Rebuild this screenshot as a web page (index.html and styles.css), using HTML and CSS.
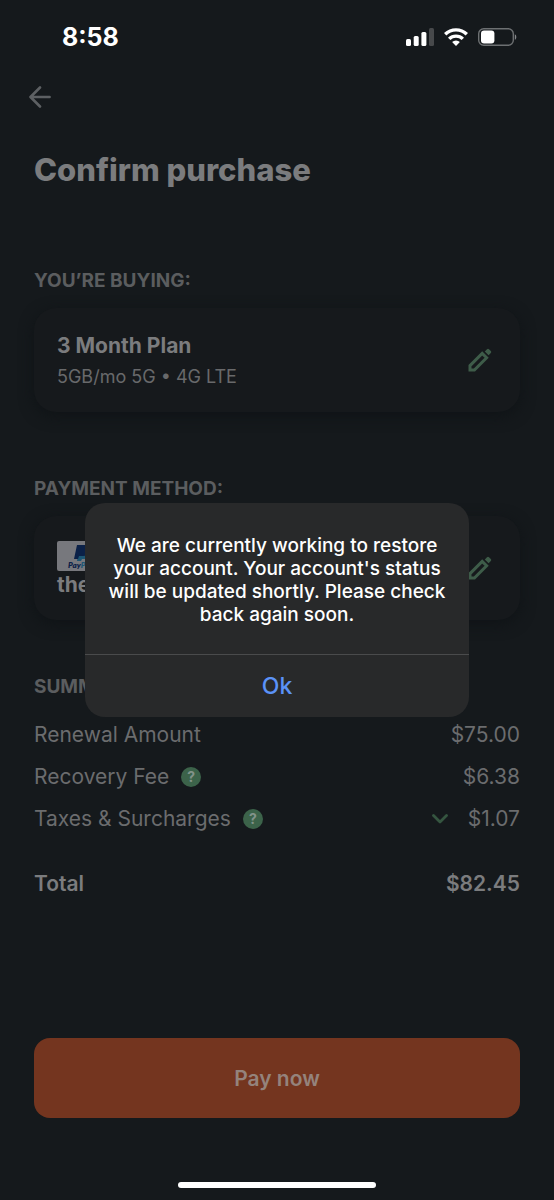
FILE: index.html
```html
<!DOCTYPE html>
<html lang="en">
<head>
<meta charset="utf-8">
<meta name="viewport" content="width=device-width, initial-scale=1">
<title>Confirm purchase</title>
<link rel="stylesheet" href="styles.css">
</head>
<body>
<div class="screen">
  <header class="status">
    <time class="clock">8:58</time>
    <div class="indicators">
      <svg width="28" height="18" viewBox="0 0 28 18" aria-hidden="true">
        <rect x="0" y="11" width="5" height="7" rx="1.5" fill="#fff"/>
        <rect x="7.7" y="8" width="5" height="10" rx="1.5" fill="#fff"/>
        <rect x="15.4" y="4" width="5" height="14" rx="1.5" fill="#fff"/>
        <rect x="23" y="0" width="5" height="18" rx="1.5" fill="#47494b"/>
      </svg>
      <svg width="24" height="18" viewBox="0 0 24 18" aria-hidden="true">
        <g fill="none" stroke="#fff" stroke-width="3.4">
          <path d="M1.200 6.300a15.400 15.400 0 0 1 21.600 0"/>
          <path d="M5.200 10.900a9.600 9.600 0 0 1 13.600 0"/>
        </g>
        <path d="M12 18l-3.900-4a5.600 5.600 0 0 1 7.800 0z" fill="#fff"/>
      </svg>
      <svg width="39" height="18" viewBox="0 0 39 18" aria-hidden="true">
        <rect x=".7" y=".7" width="34.6" height="16.6" rx="5" fill="none" stroke="#6d7072" stroke-width="1.4"/>
        <rect x="3" y="2.6" width="13.400" height="12.8" rx="3" fill="#fff"/>
        <path d="M36.800 6.200c2 .8 2 4.800 0 5.600z" fill="#85878a"/>
      </svg>
    </div>
  </header>

  <nav class="nav">
    <button class="icon-button" type="button" aria-label="Back">
      <svg width="22" height="22" viewBox="0 0 22 22" fill="none" stroke="#5d6063" stroke-width="2.600" stroke-linecap="round" stroke-linejoin="round"><path d="M20.600 11H1.600M11 1.500L1.500 11l9.500 9.500"/></svg>
    </button>
  </nav>

  <main class="content">
    <h1 class="title">Confirm purchase</h1>

    <section class="section">
      <h2 class="label">YOU’RE BUYING:</h2>
      <div class="card">
        <div class="card-text plan">
          <strong class="card-title">3 Month Plan</strong>
          <span class="card-detail">5GB/mo 5G • 4G LTE</span>
        </div>
        <button class="icon-button" type="button" aria-label="Edit plan">
          <svg width="24" height="24" viewBox="0 0 24 24"><path d="M2 17.600L14.200 5.400l4.400 4.400L6.400 22H2z" fill="none" stroke="#3e5c49" stroke-width="3"/><path d="M16.800 3.400L19 1.200q1-1 2 0l1.800 1.800q1 1 0 2l-2.200 2.200z" fill="#3e5c49"/></svg>
        </button>
      </div>
    </section>

    <section class="section">
      <h2 class="label">PAYMENT METHOD:</h2>
      <div class="card">
        <div class="card-text payment">
          <svg class="paypal" width="48" height="30" viewBox="0 0 48 30" role="img" aria-label="PayPal">
            <rect width="48" height="30" rx="2" fill="#77787d"/>
            <path d="M22 8h8q5 1 4 6-1 4-6 4h-3l-1 2h-4z" fill="#1c5674"/>
            <path d="M20 4h8q5 0 4 6-1 5-6 5h-4l-1 3h-4z" fill="#0b2148"/>
            <text class="paypal-name" x="11" y="27" fill="#0b2148">Pay<tspan fill="#1c5674">Pal</tspan></text>
          </svg>
          <strong class="card-title">the</strong>
        </div>
        <button class="icon-button" type="button" aria-label="Edit payment method">
          <svg width="24" height="24" viewBox="0 0 24 24"><path d="M2 17.600L14.200 5.400l4.400 4.400L6.400 22H2z" fill="none" stroke="#3e5c49" stroke-width="3"/><path d="M16.800 3.400L19 1.200q1-1 2 0l1.800 1.800q1 1 0 2l-2.200 2.200z" fill="#3e5c49"/></svg>
        </button>
      </div>
    </section>

    <section class="section summary">
      <h2 class="label">SUMMARY:</h2>
      <dl class="lines">
        <div class="line"><dt>Renewal Amount</dt><dd>$75.00</dd></div>
        <div class="line"><dt>Recovery Fee <button class="help" type="button" aria-label="About the recovery fee">?</button></dt><dd>$6.38</dd></div>
        <div class="line"><dt>Taxes &amp; Surcharges <button class="help" type="button" aria-label="About taxes and surcharges">?</button></dt>
          <dd><button class="icon-button" type="button" aria-label="Show taxes"><svg width="16" height="10" viewBox="0 0 16 10" fill="none" stroke="#355540" stroke-width="2.800" stroke-linecap="round" stroke-linejoin="round"><path d="M1.500 1.500L8 8l6.500-6.500"/></svg></button>$1.07</dd></div>
        <div class="line total"><dt>Total</dt><dd>$82.45</dd></div>
      </dl>
    </section>
  </main>

  <footer class="footer">
    <button class="pay" type="button">Pay now</button>
    <div class="home-bar"></div>
  </footer>

  <div class="overlay">
    <div class="dialog" role="alertdialog" aria-modal="true" aria-describedby="message">
      <p class="message" id="message">We are currently working to restore your account. Your account's status will be updated shortly. Please check back again soon.</p>
      <button class="ok" type="button">Ok</button>
    </div>
  </div>
</div>
</body>
</html>
```
FILE: styles.css
```css
* {
  box-sizing: border-box;
}

body {
  margin: 0;
  background: #15191c;
  color: #7b7c7e;
  font-family: Inter, "Open Sans", sans-serif;
}

button {
  padding: 0;
  border: 0;
  background: none;
  color: inherit;
  font: inherit;
}

.screen {
  position: relative;
  display: flex;
  flex-direction: column;
  min-height: 100vh;
}

.status {
  display: flex;
  align-items: center;
  justify-content: space-between;
  height: 74px;
  padding: 0 37px 0 62px;
  color: #fff;
}

.clock {
  font-size: 25px;
  font-weight: 700;
  line-height: 28px;
}

.indicators {
  display: flex;
  gap: 10px;
}

.nav {
  display: flex;
  align-items: center;
  height: 46px;
  padding: 0 29px;
}

.icon-button {
  display: flex;
}

.content {
  padding: 30px 34px 0;
}

.title {
  margin: 0 0 79px;
  font-size: 31px;
  font-weight: 800;
  line-height: 40px;
}

.section {
  margin-bottom: 65px;
}

.summary {
  margin: -10px 0 0;
}

.label {
  margin: 0 0 15px;
  color: #5b5d5f;
  font-size: 19px;
  font-weight: 700;
  line-height: 24px;
}

.card {
  display: flex;
  align-items: center;
  justify-content: space-between;
  min-height: 104px;
  padding: 0 28px 0 23px;
  border-radius: 22px;
  background: #16191c;
  box-shadow: 0 4px 14px 1px #101417;
}

.card-text {
  display: flex;
  flex-direction: column;
}

.plan {
  gap: 3px;
  padding-top: 2px;
}

.payment {
  padding-top: 3px;
}

.card-title {
  font-size: 21px;
  font-weight: 700;
  line-height: 28px;
}

.card-detail {
  color: #68696b;
  font-size: 18px;
  line-height: 28px;
}

.paypal-name {
  font: italic 800 8px Lato, sans-serif;
}

.lines {
  margin: 0;
  font-size: 21px;
  line-height: 28px;
}

.line {
  display: flex;
  align-items: center;
  justify-content: space-between;
  min-height: 42px;
  color: #6b6c6e;
}

.line dt,
.line dd {
  display: flex;
  align-items: center;
  margin: 0;
}

.line dt {
  gap: 12px;
}

.line dd {
  gap: 20px;
}

.help {
  width: 20px;
  height: 20px;
  border-radius: 50%;
  background: #3c634a;
  color: #82938a;
  font-size: 14px;
  font-weight: 700;
  line-height: 20px;
}

.line.total {
  margin-top: 23px;
  color: #7b7c7e;
  font-weight: 600;
}

.footer {
  display: flex;
  flex-direction: column;
  align-items: center;
  gap: 64px;
  margin-top: auto;
  padding: 32px 34px 12px;
}

.pay {
  width: 100%;
  height: 80px;
  border-radius: 16px;
  background: #74351f;
  color: #94837c;
  font-size: 21px;
  font-weight: 600;
}

.home-bar {
  width: 198px;
  height: 6px;
  border-radius: 3px;
  background: #fff;
}

.overlay {
  position: absolute;
  inset: 0;
  display: flex;
  align-items: center;
  justify-content: center;
  padding: 20px 16px 0;
}

.dialog {
  width: 100%;
  max-width: 384px;
  overflow: hidden;
  border-radius: 20px;
  background: #28292a;
}

.message {
  margin: 0;
  padding: 31px 20px 28px;
  color: #fff;
  font-size: 19px;
  font-weight: 500;
  line-height: 23px;
  text-align: center;
}

.ok {
  width: 100%;
  height: 63px;
  border-top: 1px solid #4a4b4c;
  color: #5b92f7;
  font-size: 23px;
  font-weight: 500;
}
```
